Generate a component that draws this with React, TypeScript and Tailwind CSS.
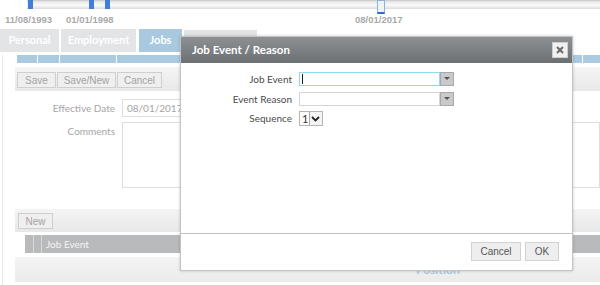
import { FC } from "react";

const seg = "'Lato', 'Open Sans', sans-serif";

const GrayButton: FC<{ label: string; w: string }> = ({ label, w }) => (
  <div
    className={`${w} h-[16px] flex items-center justify-center border border-[#cfcfcf] bg-[#efefef] text-[10px] text-[#a3a3a3]`}
    style={{ fontFamily: "'Liberation Sans', Arial, sans-serif" }}
  >
    {label}
  </div>
);

const Timeline: FC = () => (
  <div className="relative h-[29px]">
    <div className="absolute left-[27px] right-0 top-0 h-[9px] border-t border-[#cfcfcf] bg-gradient-to-b from-[#e2e2e2] via-[#fbfbfb] to-[#dcdcdc]" />
    <div className="absolute left-[28px] top-0 w-[5px] h-[9px] bg-[#3f7fd6]" />
    <div className="absolute left-[89px] top-0 w-[5px] h-[9px] bg-[#3f7fd6]" />
    <div className="absolute left-[105px] top-0 w-[5px] h-[9px] bg-[#3f7fd6]" />
    <div className="absolute left-[377px] top-0 w-[8px] h-[14px] bg-[#eef3fb] border border-[#8eb0e0] border-b-2 border-b-[#2f6cc4]" />
    <span className="absolute left-[5px] top-[13px] text-[9.5px] font-bold text-[#a9a9a9]">11/08/1993</span>
    <span className="absolute left-[66px] top-[13px] text-[9.5px] font-bold text-[#a9a9a9]">01/01/1998</span>
    <span className="absolute left-[355px] top-[13px] text-[9.5px] font-bold text-[#a9a9a9]">08/01/2017</span>
  </div>
);

const Tabs: FC = () => (
  <div className="flex h-[23px] text-[11px] font-bold text-white" style={{ fontFamily: seg }}>
    <div className="w-[59px] bg-[#e3e4e6] flex items-center justify-center">Personal</div>
    <div className="w-[75px] ml-[2px] bg-[#e3e4e6] flex items-center justify-center">Employment</div>
    <div className="w-[43px] ml-[3px] bg-[#a8c9df] flex items-center justify-center">Jobs</div>
    <div className="w-[73px] ml-[2px] mt-[1px] bg-[#e3e4e6]" />
  </div>
);

const Caret: FC = () => (
  <div className="w-[14px] h-[14px] bg-[#c8c9ca] border border-[#a9a9a9] flex items-center justify-center">
    <svg width="6" height="4" viewBox="0 0 6 4">
      <path d="M0 0H6L3 3Z" fill="#555" />
    </svg>
  </div>
);

const Dialog: FC = () => (
  <div
    className="absolute left-[180px] top-[36px] w-[393px] h-[235px] bg-white border border-[#c4c4c4] shadow-[0_0_3px_rgba(0,0,0,0.2)] flex flex-col"
    style={{ fontFamily: seg }}
  >
    <div className="h-[26px] flex items-center justify-between pl-[11px] pr-[4px] bg-gradient-to-b from-[#8d9194] to-[#6c7073]">
      <span className="text-[11.5px] font-bold text-white">Job Event / Reason</span>
      <div className="w-[16px] h-[16px] bg-[#f1f1f1] border border-[#cdcdcd] flex items-center justify-center">
        <svg width="8" height="8" viewBox="0 0 8 8">
          <path d="M1 1L7 7M7 1L1 7" stroke="#6a6a6a" strokeWidth="2" />
        </svg>
      </div>
    </div>
    <div className="flex-1 pt-[9px] text-[10px] text-[#4a4a4a]">
      <div className="flex items-center h-[14px]">
        <span className="w-[111px] text-right">Job Event</span>
        <div className="ml-[7px] w-[141px] h-[14px] border border-[#8fdaf0] flex items-center pl-[2px]">
          <div className="w-px h-[10px] bg-[#222]" />
        </div>
        <Caret />
      </div>
      <div className="flex items-center h-[14px] mt-[6px]">
        <span className="w-[111px] text-right">Event Reason</span>
        <div className="ml-[7px] w-[141px] h-[14px] border border-[#d5d5d5]" />
        <Caret />
      </div>
      <div className="flex items-center h-[15px] mt-[5px]">
        <span className="w-[111px] text-right">Sequence</span>
        <div className="ml-[7px] w-[24px] h-[15px] border border-[#b5b5b5] flex items-center">
          <span className="w-[9px] pl-[2px] text-[11px] text-[#333] leading-none">1</span>
          <div className="w-[14px] h-[13px] border-l border-[#a9a9a9] bg-[#f4f4f4] flex items-center justify-center">
            <svg width="9" height="6" viewBox="0 0 9 6">
              <path d="M1 1L4.5 4.5L8 1" stroke="#222" strokeWidth="1.8" fill="none" />
            </svg>
          </div>
        </div>
      </div>
    </div>
    <div className="h-[37px] border-t border-[#c2c2c2] flex justify-end items-start pt-[8px] pr-[13px] gap-[4px]">
      <div
        className="w-[50px] h-[19px] border border-[#d2d2d2] bg-[#eeeeee] text-[10px] text-[#555] flex items-center justify-center"
        style={{ fontFamily: "'Liberation Sans', Arial, sans-serif" }}
      >
        Cancel
      </div>
      <div
        className="w-[34px] h-[19px] border border-[#d2d2d2] bg-[#eeeeee] text-[10px] text-[#555] flex items-center justify-center"
        style={{ fontFamily: "'Liberation Sans', Arial, sans-serif" }}
      >
        OK
      </div>
    </div>
  </div>
);

export default function App() {
  return (
    <div
      className="relative w-[600px] h-[285px] overflow-hidden bg-white"
      style={{ fontFamily: "'Liberation Sans', Arial, sans-serif" }}
    >
      <Timeline />
      <Tabs />
      <div className="ml-[2px] border-l border-[#e8e8e8] h-[240px]">
        <div className="flex gap-px ml-[14px] mt-[3px] h-[8px]">
          <div className="w-[20px] bg-[#a9cae1]" />
          <div className="w-[21px] bg-[#a9cae1]" />
          <div className="w-[56px] bg-[#a9cae1]" />
          <div className="w-[465px] bg-[#a9cae1]" />
          <div className="flex-1 bg-[#a9cae1]" />
        </div>
        <div className="ml-[12px] mt-[4px] h-[24px] bg-gradient-to-b from-[#f4f4f4] to-[#e8e8e8] flex items-start pt-[5px] pl-[2px] gap-px">
          <GrayButton label="Save" w="w-[39px]" />
          <GrayButton label="Save/New" w="w-[59px]" />
          <GrayButton label="Cancel" w="w-[45px]" />
        </div>
        <div className="flex items-center mt-[8px] h-[18px] text-[10px] text-[#a5a5a5]" style={{ fontFamily: seg }}>
          <span className="w-[112px] text-right">Effective Date</span>
          <div className="ml-[7px] w-[90px] h-[18px] border border-[#dedede] flex items-center pl-[4px]">08/01/2017</div>
        </div>
        <div className="flex items-start mt-[5px] text-[10px] text-[#a5a5a5]" style={{ fontFamily: seg }}>
          <span className="w-[112px] text-right pt-[2px]">Comments</span>
          <div className="ml-[7px] flex-1 h-[66px] border border-[#dedede]" />
        </div>
        <div className="ml-[12px] mt-[21px] h-[23px] bg-gradient-to-b from-[#f4f4f4] to-[#e8e8e8] flex items-start pt-[4px] pl-[3px]">
          <GrayButton label="New" w="w-[35px]" />
        </div>
        <div className="ml-[22px] mt-[3px] h-[18px] flex gap-px bg-[#d8d8d8]">
          <div className="w-[8px] bg-[#b9babc]" />
          <div className="w-[7px] bg-[#b9babc]" />
          <div className="flex-1 bg-[#b9babc] flex items-center pl-[4px] text-[10px] text-[#f5f5f5]" style={{ fontFamily: seg }}>
            Job Event
          </div>
        </div>
        <div className="ml-[12px] mt-[4px] h-[25px] bg-gradient-to-b from-[#f4f4f4] to-[#ebebeb] flex items-center pl-[401px] text-[12px] font-bold text-[#a9c9e0]" style={{ fontFamily: seg }}>
          Position
        </div>
      </div>
      <Dialog />
    </div>
  );
}
